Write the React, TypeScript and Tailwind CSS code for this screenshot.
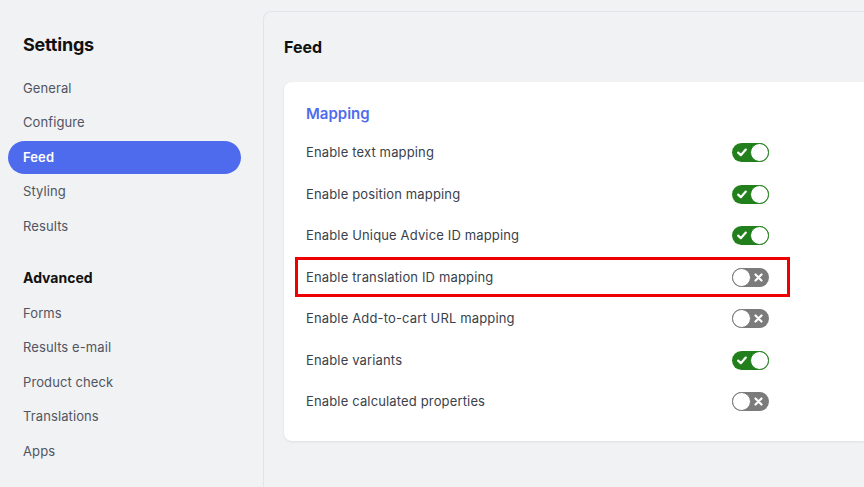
import React from 'react';

const mainNav = ['General', 'Configure', 'Feed', 'Styling', 'Results'];
const advancedNav = ['Forms', 'Results e-mail', 'Product check', 'Translations', 'Apps'];

const options = [
  { label: 'Enable text mapping', on: true },
  { label: 'Enable position mapping', on: true },
  { label: 'Enable Unique Advice ID mapping', on: true },
  { label: 'Enable translation ID mapping', on: false, marked: true },
  { label: 'Enable Add-to-cart URL mapping', on: false },
  { label: 'Enable variants', on: true },
  { label: 'Enable calculated properties', on: false },
];

function Toggle({ on }: { on: boolean }) {
  if (on) {
    return (
      <div className="relative w-[37px] h-[19px] rounded-full bg-[#22801c] flex items-center">
        <svg className="absolute left-[5px] top-[5px]" width="10" height="9" viewBox="0 0 10 9">
          <path d="M1.2 4.6 L3.8 7.2 L8.8 1.6" fill="none" stroke="white" strokeWidth="2.2" strokeLinecap="round" strokeLinejoin="round" />
        </svg>
        <div className="absolute right-0 top-0 w-[19px] h-[19px] rounded-full bg-white border border-[#22801c]" />
      </div>
    );
  }
  return (
    <div className="relative w-[37px] h-[19px] rounded-full bg-[#7b7b7b] flex items-center">
      <svg className="absolute right-[6px] top-[5px]" width="9" height="9" viewBox="0 0 9 9">
        <path d="M1.5 1.5 L7.5 7.5 M7.5 1.5 L1.5 7.5" fill="none" stroke="white" strokeWidth="2.2" strokeLinecap="round" />
      </svg>
      <div className="absolute left-0 top-0 w-[19px] h-[19px] rounded-full bg-white border border-[#7b7b7b]" />
    </div>
  );
}

export default function App() {
  return (
    <div
      className="w-[864px] h-[487px] overflow-hidden bg-[#f1f2f4] flex"
      style={{ fontFamily: 'Inter, "Noto Sans", sans-serif' }}
    >
      <aside className="w-[263px] shrink-0 pl-2 pr-[22px] pt-[34px]">
        <h1 className="pl-[15px] text-[18px] font-bold text-[#111] leading-[22px] tracking-[-0.2px]">Settings</h1>
        <nav className="mt-[16px] flex flex-col gap-[1.5px]">
          {mainNav.map((item) => (
            <div
              key={item}
              className={
                item === 'Feed'
                  ? 'h-[33px] flex items-center pl-[15px] rounded-full bg-[#4f6bed] text-white font-semibold text-[13px] tracking-[0.1px]'
                  : 'h-[33px] flex items-center pl-[15px] text-[13px] text-[#505561] tracking-[0.1px]'
              }
            >
              {item}
            </div>
          ))}
        </nav>
        <h2 className="mt-[26px] pl-[15px] text-[14px] font-bold text-[#111] leading-[18px]">Advanced</h2>
        <nav className="mt-[10px] flex flex-col gap-[1.5px]">
          {advancedNav.map((item) => (
            <div key={item} className="h-[33px] flex items-center pl-[15px] text-[13px] text-[#505561] tracking-[0.1px]">
              {item}
            </div>
          ))}
        </nav>
      </aside>

      <main className="flex-1 mt-[11px] border-l border-t border-[#e2e4e8] rounded-tl-[8px] pl-[20px] pt-[25px]">
        <h2 className="text-[16px] font-bold text-[#111] leading-[20px]">Feed</h2>
        <section className="mt-[25px] bg-white rounded-l-[8px] shadow-[0_1px_3px_rgba(0,0,0,0.08)] pl-[22px] pt-[23px] pb-[18px]">
          <h3 className="text-[15px] font-semibold text-[#4f6bed] leading-[18px]">Mapping</h3>
          <div className="mt-[9px] w-[463px] flex flex-col">
            {options.map((opt) => (
              <div
                key={opt.label}
                className={
                  opt.marked
                    ? 'relative h-[41.5px] flex items-center justify-between'
                    : 'h-[41.5px] flex items-center justify-between'
                }
              >
                {opt.marked && (
                  <div className="absolute left-[-11px] right-[-21px] top-[0px] bottom-[1px] border-[3px] border-[#ee0000]" />
                )}
                <span className="text-[13px] text-[#3a3f4b] tracking-[0.15px]">{opt.label}</span>
                <Toggle on={opt.on} />
              </div>
            ))}
          </div>
        </section>
      </main>
    </div>
  );
}
